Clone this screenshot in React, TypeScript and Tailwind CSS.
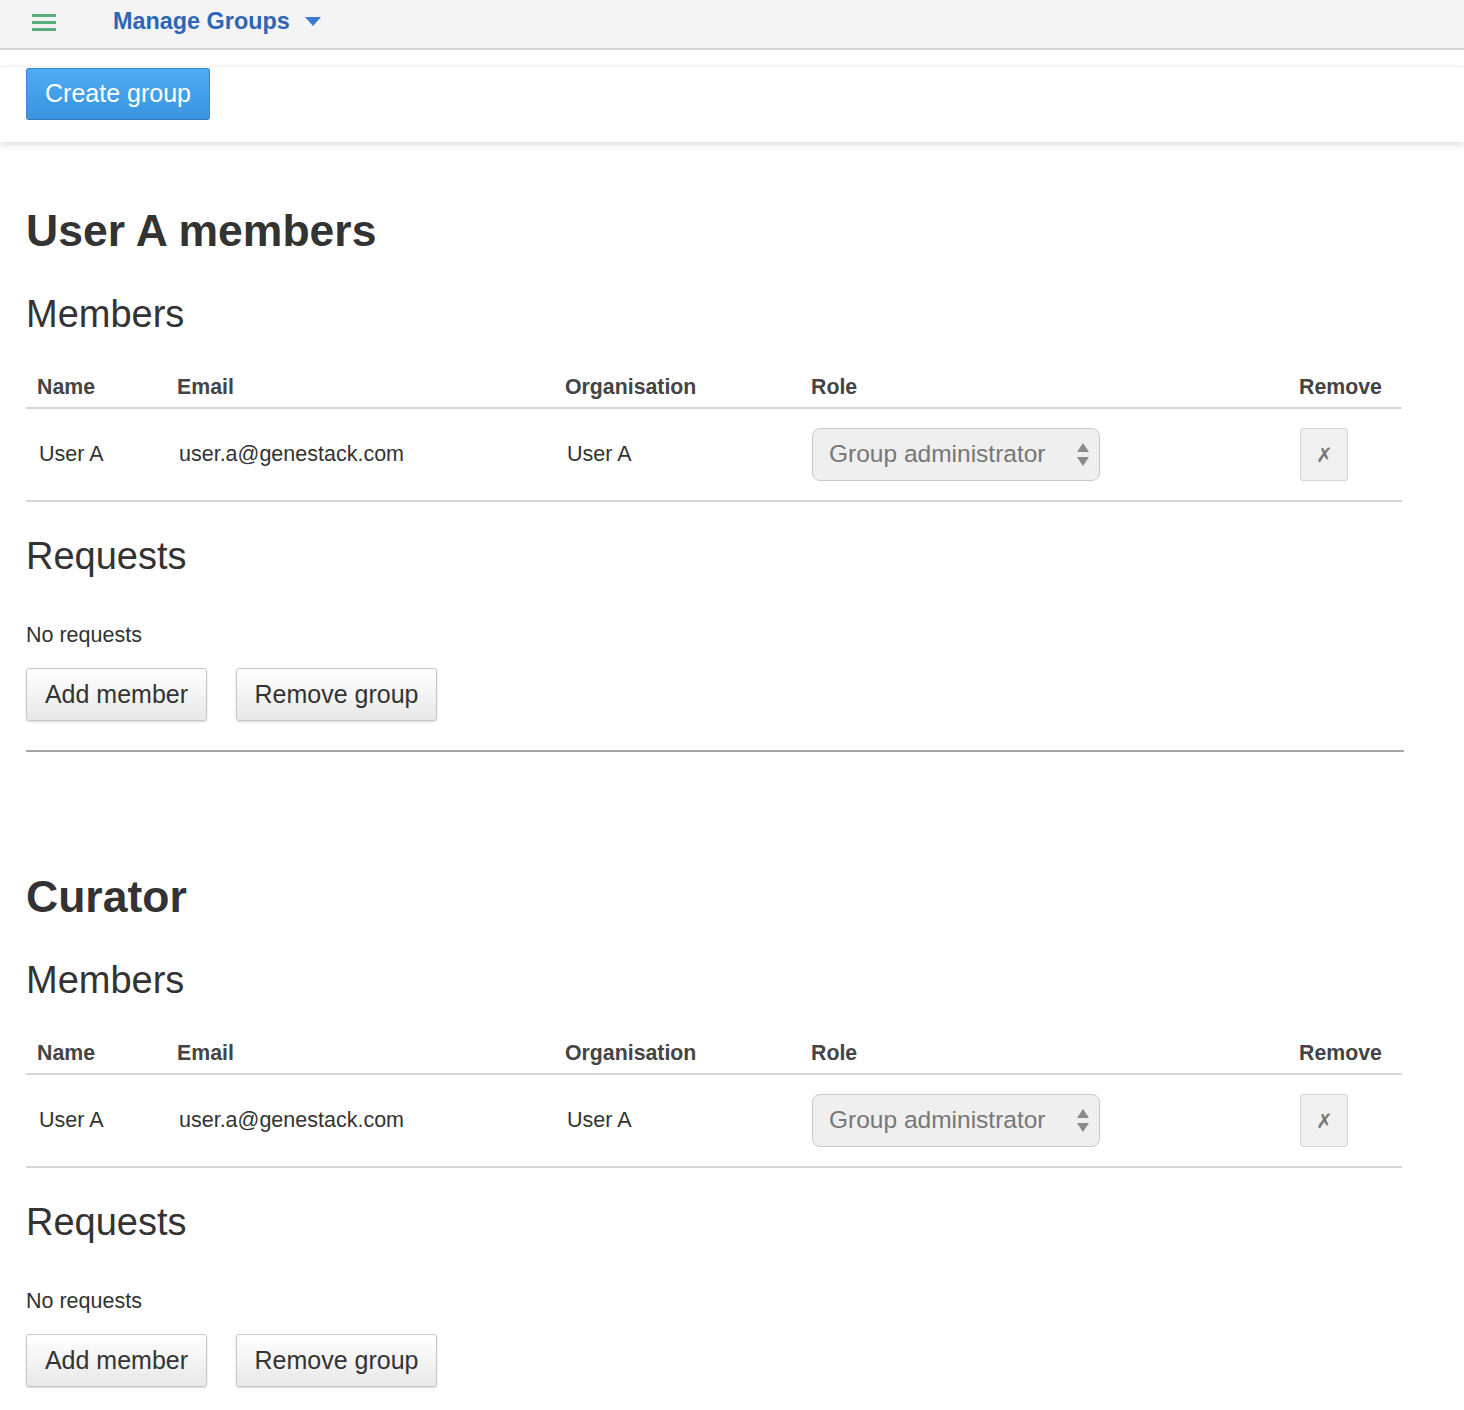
import React from 'react'

type Member = { name: string; email: string; org: string; role: string }

const groups: { title: string; members: Member[] }[] = [
  {
    title: 'User A members',
    members: [{ name: 'User A', email: 'user.a@genestack.com', org: 'User A', role: 'Group administrator' }],
  },
  {
    title: 'Curator',
    members: [{ name: 'User A', email: 'user.a@genestack.com', org: 'User A', role: 'Group administrator' }],
  },
]

function SelectArrows() {
  return (
    <svg width="12" height="24" viewBox="0 0 12 24" className="absolute right-[10px] top-[14px]">
      <path d="M6 0 L12 9 L0 9 Z" fill="#8a8a8a" />
      <path d="M0 14 L12 14 L6 23 Z" fill="#8a8a8a" />
    </svg>
  )
}

function GrayButton({ label, width }: { label: string; width: string }) {
  return (
    <button
      className={`${width} h-[53px] rounded-[3px] border border-[#c6c6c6] bg-gradient-to-b from-[#ffffff] to-[#e8e8e8] text-[25px] text-[#333] shadow-[0_1px_2px_rgba(0,0,0,0.15)] flex items-center justify-center`}
    >
      {label}
    </button>
  )
}

function GroupSection({ title, members, first }: { title: string; members: Member[]; first: boolean }) {
  return (
    <section className={first ? 'mt-[65px]' : 'mt-[121px]'}>
      <h1 className="text-[44.5px] leading-[48px] font-bold text-[#333]">{title}</h1>
      <h2 className="mt-[39px] text-[38px] leading-[40px] text-[#333]">Members</h2>

      <div className="mt-[35px] w-[1376px]">
        <div className="grid grid-cols-[140px_388px_246px_488px_114px] h-[40px] items-center border-b-2 border-[#d6d6d6] text-[21.3px] font-bold text-[#444]">
          <div className="pl-[11px]">Name</div>
          <div className="pl-[11px]">Email</div>
          <div className="pl-[11px]">Organisation</div>
          <div className="pl-[11px]">Role</div>
          <div className="pl-[11px]">Remove</div>
        </div>
        {members.map((m, i) => (
          <div
            key={i}
            className="grid grid-cols-[140px_388px_246px_488px_114px] h-[93px] items-center border-b-2 border-[#d6d6d6] text-[21.5px] text-[#333]"
          >
            <div className="pl-[13px]">{m.name}</div>
            <div className="pl-[13px]">{m.email}</div>
            <div className="pl-[13px]">{m.org}</div>
            <div className="pl-[12px]">
              <div className="relative w-[288px] h-[53px] rounded-[8px] border border-[#c8c8c8] bg-[#efefef] flex items-center pl-[16px] text-[24.5px] text-[#777]">
                {m.role}
                <SelectArrows />
              </div>
            </div>
            <div className="pl-[12px]">
              <button className="w-[48px] h-[53px] rounded-[3px] border border-[#d6d6d6] bg-[#f0f0f0] text-[20px] text-[#777] flex items-center justify-center">
                ✗
              </button>
            </div>
          </div>
        ))}
      </div>

      <h2 className="mt-[34px] text-[38px] leading-[40px] text-[#333]">Requests</h2>
      <p className="mt-[47px] text-[21.5px] leading-[24px] text-[#333]">No requests</p>
      <div className="mt-[21px] flex gap-[29px]">
        <GrayButton label="Add member" width="w-[181px]" />
        <GrayButton label="Remove group" width="w-[201px]" />
      </div>
      <div className="mt-[29px] w-[1378px] border-t-2 border-[#a5a5a5]" />
    </section>
  )
}

export default function App() {
  return (
    <div className="min-h-[1410px] bg-white font-['Liberation_Sans',Arial,sans-serif]">
      <header className="h-[50px] bg-[#f4f4f4] border-b-2 border-[#d4d4d4] flex items-center">
        <div className="ml-[32px] flex flex-col gap-[4px] mt-[-4px]">
          <span className="block w-[24px] h-[3px] bg-[#5aae7c]" />
          <span className="block w-[24px] h-[3px] bg-[#5aae7c]" />
          <span className="block w-[24px] h-[3px] bg-[#5aae7c]" />
        </div>
        <div className="ml-[57px] flex items-center gap-[15px] mt-[-5px]">
          <span className="text-[23.4px] font-bold text-[#2c66b6]">Manage Groups</span>
          <svg width="16" height="9" viewBox="0 0 16 9">
            <path d="M0 0 L16 0 L8 9 Z" fill="#3a7bcf" />
          </svg>
        </div>
      </header>

      <div className="relative mt-[16px] border-t border-[#f1f1f1] pt-[1px] pb-[22px] px-[26px] bg-white shadow-[0_3px_6px_rgba(0,0,0,0.13)]">
        <button className="w-[184px] h-[52px] rounded-[3px] border border-[#3889d2] border-b-[#3377b8] bg-gradient-to-b from-[#4eacf4] to-[#3a94df] text-[25px] text-white flex items-center justify-center">
          Create group
        </button>
      </div>

      <main className="px-[26px] pb-[40px]">
        {groups.map((g, i) => (
          <GroupSection key={i} title={g.title} members={g.members} first={i === 0} />
        ))}
      </main>
    </div>
  )
}
